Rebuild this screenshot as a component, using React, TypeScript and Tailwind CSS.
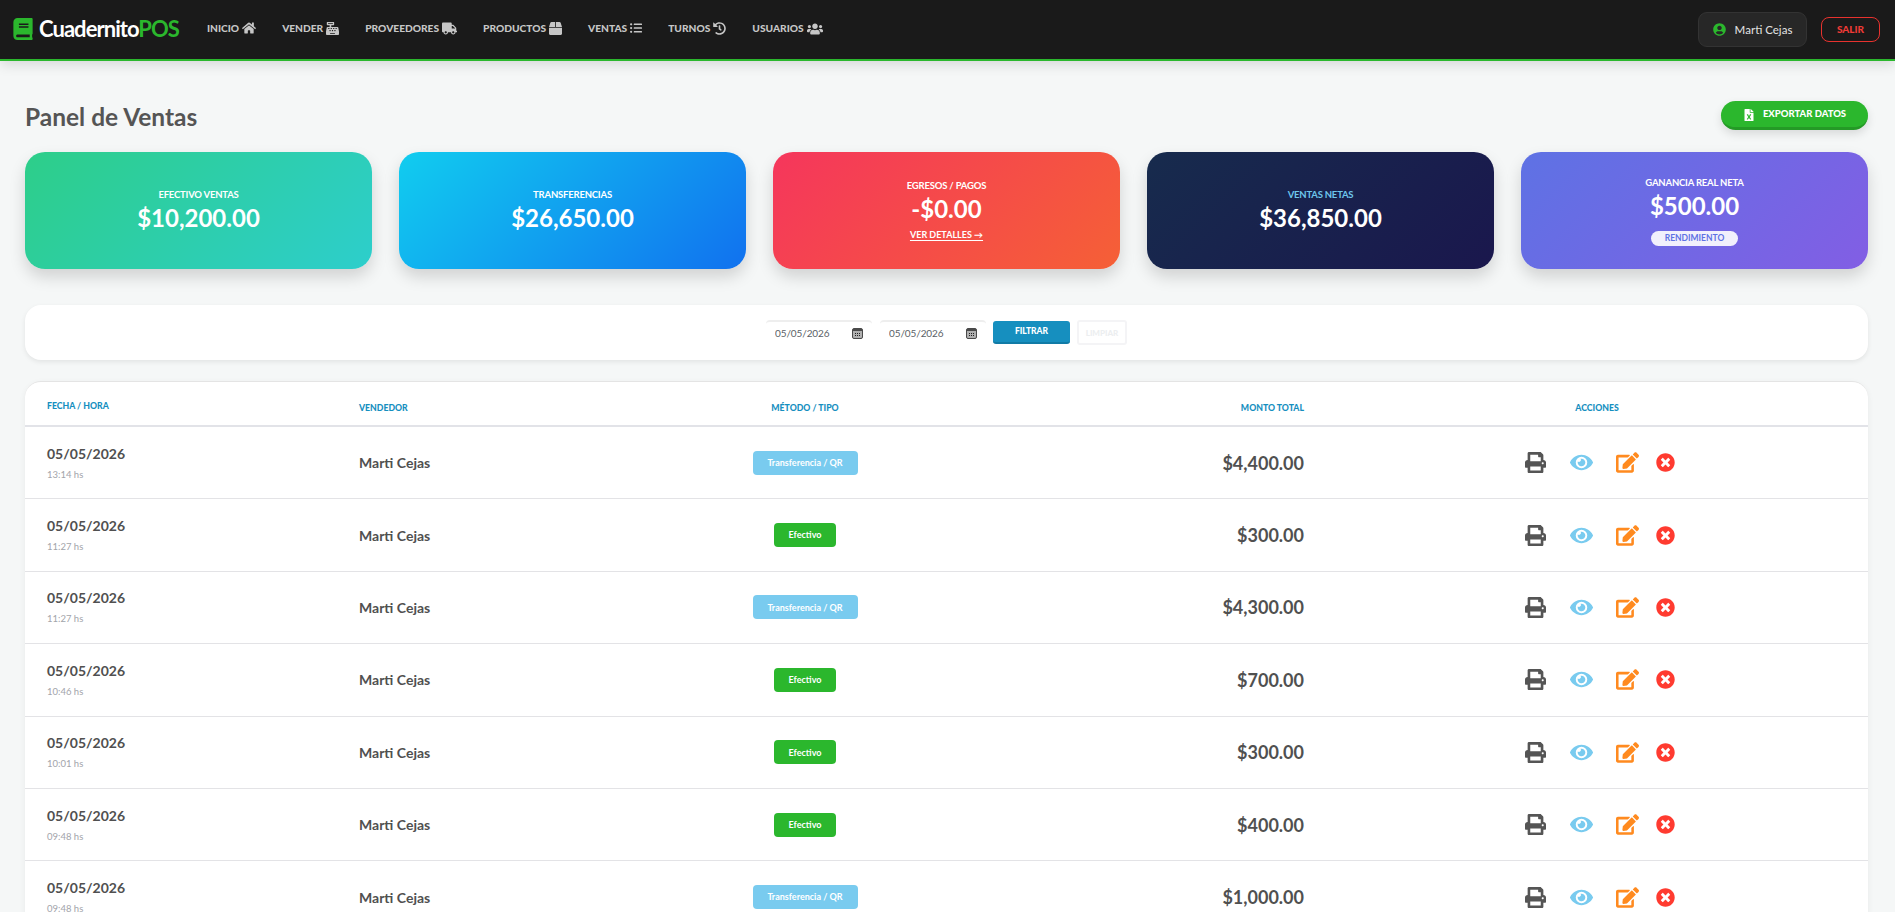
import type { ReactNode } from "react"
import {
    FaBook, FaBox, FaCashRegister, FaEdit, FaEye, FaFileExcel, FaHistory, FaHome,
    FaListUl, FaPrint, FaTimesCircle, FaTruck, FaUserCircle, FaUsers,
} from "react-icons/fa"

const navItems = [
    { label: "INICIO", icon: <FaHome className="text-[14px]" /> },
    { label: "VENDER", icon: <FaCashRegister className="text-[13px]" /> },
    { label: "PROVEEDORES", icon: <FaTruck className="text-[15px]" /> },
    { label: "PRODUCTOS", icon: <FaBox className="text-[13px]" /> },
    { label: "VENTAS", icon: <FaListUl className="text-[12px]" /> },
    { label: "TURNOS", icon: <FaHistory className="text-[13px]" /> },
    { label: "USUARIOS", icon: <FaUsers className="text-[16px]" /> },
]

const sales = [
    { time: "13:14 hs", transfer: true, total: "$4,400.00" },
    { time: "11:27 hs", transfer: false, total: "$300.00" },
    { time: "11:27 hs", transfer: true, total: "$4,300.00" },
    { time: "10:46 hs", transfer: false, total: "$700.00" },
    { time: "10:01 hs", transfer: false, total: "$300.00" },
    { time: "09:48 hs", transfer: false, total: "$400.00" },
    { time: "09:48 hs", transfer: true, total: "$1,000.00" },
]

const columns = "grid grid-cols-[312px_293px_350px_346px_1fr] items-center"

function StatCard({ gradient, label, labelColor = "text-white", value, children }: {
    gradient: string,
    label: string,
    labelColor?: string,
    value: string,
    children?: ReactNode,
}) {
    return (
        <div className={`h-[117px] rounded-[20px] flex flex-col items-center justify-center text-white shadow-[0_8px_16px_rgba(0,0,0,0.15)] ${gradient}`}>
            <span className={`text-[9.5px] leading-[14px] font-bold tracking-[-0.2px] ${labelColor}`}>{label}</span>
            <span className="text-[24px] leading-[32px] font-bold">{value}</span>
            {children}
        </div>
    )
}

function DateField() {
    return (
        <div className="w-[106px] h-[25px] pl-[9px] pr-[9px] bg-white border-t-2 border-t-[#eeeeee] rounded flex items-center justify-between">
            <input
                type="text"
                readOnly
                value="05/05/2026"
                className="w-[70px] text-[10px] tracking-[-0.1px] text-[#5a5f66] outline-none"
            />
            <svg viewBox="0 0 11 11" className="w-[11px] h-[11px]">
                <rect x="0.5" y="0.5" width="10" height="10" rx="1.5" fill="#b0b0b0" stroke="#4a4a4a" />
                <rect x="1" y="1" width="9" height="2" fill="#4a4a4a" />
                <path d="M3 5h1v1H3zM5 5h1v1H5zM7 5h1v1H7zM3 7h1v1H3zM5 7h1v1H5zM7 7h1v1H7z" fill="#222222" />
            </svg>
        </div>
    )
}

export default function App() {
    return (
        <div className="h-screen overflow-hidden bg-[#f5f7f7] font-[Lato,sans-serif]">
            <header className="h-[61px] bg-[#1a1a1a] border-b-2 border-[#2bb72d] flex items-center pl-[13px] pr-[15px] shadow-[0_4px_12px_rgba(0,0,0,0.12)] relative">
                <div className="flex items-center gap-[6px] w-[194px] -mt-[2px]">
                    <FaBook className="text-[20px] text-[#2bb72d] h-[22px]" />
                    <span className="text-[22px] font-bold text-white tracking-[-0.95px]">
                        Cuadernito<span className="text-[#2bb72d]">POS</span>
                    </span>
                </div>
                <nav className="flex items-center gap-[26px] -mt-[2px] text-[#c6c6c6]">
                    {navItems.map((item) => (
                        <a key={item.label} className="flex items-center gap-[3px] text-[10.2px] font-black">
                            {item.label}
                            {item.icon}
                        </a>
                    ))}
                </nav>
                <div className="ml-auto flex items-center gap-[14px]">
                    <div className="w-[109px] h-[35px] rounded-[9px] bg-[#272727] border border-[#333333] flex items-center justify-center gap-[9px]">
                        <FaUserCircle className="text-[13px] text-[#2bb72d]" />
                        <span className="text-[11.5px] font-medium text-[#dddddd]">Marti Cejas</span>
                    </div>
                    <button className="w-[59px] h-[25px] rounded-[8px] border-[1.5px] border-[#e8322e] text-[#f03a36] text-[10px] font-black">
                        SALIR
                    </button>
                </div>
            </header>

            <main className="pl-[25px] pr-[27px] pt-[40px]">
                <div className="h-[29px] flex items-center justify-between mb-[22px]">
                    <h1 className="pt-[1px] text-[24.5px] leading-[29px] font-bold text-[#555555]">Panel de Ventas</h1>
                    <button className="w-[147px] h-[29px] pt-[1px] rounded-full bg-[#2bb72d] border-b-[3px] border-[#249a26] flex items-center justify-center gap-2 text-white text-[9.5px] font-black shadow-[0_4px_10px_rgba(0,0,0,0.12)]">
                        <FaFileExcel className="text-[12px]" />
                        EXPORTAR DATOS
                    </button>
                </div>

                <div className="grid grid-cols-5 gap-[27px] mb-[36px]">
                    <StatCard gradient="bg-[linear-gradient(135deg,#2dce89,#2dcecc)]" label="EFECTIVO VENTAS" value="$10,200.00" />
                    <StatCard gradient="bg-[linear-gradient(135deg,#11cdef,#1171ef)]" label="TRANSFERENCIAS" value="$26,650.00" />
                    <StatCard gradient="bg-[linear-gradient(135deg,#f5365c,#f56036)]" label="EGRESOS / PAGOS" value="-$0.00">
                        <a className="mt-[3px] text-[9px] leading-[14px] font-bold underline underline-offset-2">VER DETALLES →</a>
                    </StatCard>
                    <StatCard gradient="bg-[linear-gradient(135deg,#172b4d,#1a174d)]" label="VENTAS NETAS" labelColor="text-[#6ec6ec]" value="$36,850.00" />
                    <StatCard gradient="bg-[linear-gradient(135deg,#5e72e4,#825ee4)]" label="GANANCIA REAL NETA" value="$500.00">
                        <span className="mt-[9px] w-[87px] h-[15px] rounded-full bg-white/90 text-[#5e72e4] text-[8.5px] font-bold flex items-center justify-center">RENDIMIENTO</span>
                    </StatCard>
                </div>

                <div className="h-[55px] mb-[21px] bg-white rounded-2xl shadow-[0_2px_5px_rgba(0,0,0,0.08)] flex items-center justify-center gap-2">
                    <DateField />
                    <DateField />
                    <button className="w-[77px] h-[23px] ml-[-1px] rounded-[3px] bg-[#168fbf] border-b-2 border-[#117ba6] text-white text-[8.5px] font-black">FILTRAR</button>
                    <button className="w-[50px] h-[25px] ml-[-1px] rounded-[3px] bg-white border-2 border-[#f4f4f6] text-[#eceef0] text-[8px] font-black">LIMPIAR</button>
                </div>

                <div className="bg-white rounded-2xl border-t border-[#e4e4e4] shadow-[0_2px_6px_rgba(0,0,0,0.06)] overflow-hidden">
                    <div className={`${columns} h-[45px] pt-[9px] border-b-2 border-[#e2e3e8] text-[8.7px] font-black text-[#168fbf]`}>
                        <span className="pl-[22px] pb-[5px]">FECHA / HORA</span>
                        <span className="pl-[22px]">VENDEDOR</span>
                        <span className="text-center">MÉTODO / TIPO</span>
                        <span className="text-right pr-[22px]">MONTO TOTAL</span>
                        <span className="text-center">ACCIONES</span>
                    </div>
                    {sales.map((sale, i) => (
                        <div key={i} className={`${columns} h-[72.4px] border-b border-[#e3e3e6] text-[#505050]`}>
                            <div className="pl-[22px] flex flex-col gap-[4px]">
                                <span className="text-[14px] leading-[20px] font-bold">05/05/2026</span>
                                <span className="text-[9.5px] leading-[14px] text-[#a2a4aa]">{sale.time}</span>
                            </div>
                            <span className="pl-[22px] text-[14px] font-bold">Marti Cejas</span>
                            <div className="flex justify-center">
                                {sale.transfer ? (
                                    <span className="w-[105px] h-[24px] rounded bg-[#79cbef] text-white text-[9px] font-bold flex items-center justify-center">Transferencia / QR</span>
                                ) : (
                                    <span className="w-[62px] h-[24px] rounded bg-[#2bb72d] text-white text-[9px] font-bold flex items-center justify-center">Efectivo</span>
                                )}
                            </div>
                            <span className="text-right pr-[22px] pt-[1px] text-[18px] font-bold">{sale.total}</span>
                            <div className="flex items-center justify-center pl-[5px]">
                                <FaPrint className="text-[21px] text-[#555555] mr-[24px]" />
                                <FaEye className="text-[23px] text-[#79cbef] mr-[23px]" />
                                <FaEdit className="text-[23px] text-[#ff8a1f] mr-[17px]" />
                                <FaTimesCircle className="text-[19px] text-[#ff3b30]" />
                            </div>
                        </div>
                    ))}
                </div>
            </main>
        </div>
    )
}
